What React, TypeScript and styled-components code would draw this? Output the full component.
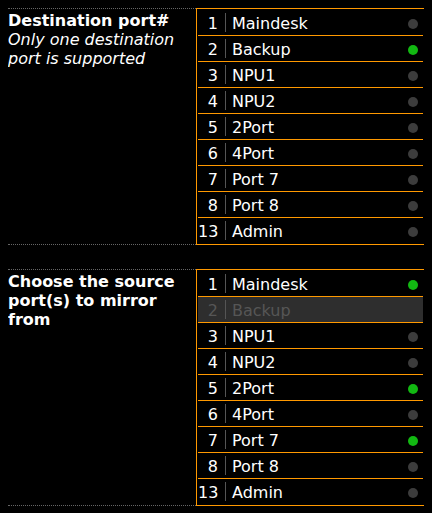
import React from "react";
import styled, { createGlobalStyle } from "styled-components";

const GlobalStyle = createGlobalStyle`
  html, body {
    background: #000;
  }
  body {
    margin: 8px;
    color: #fff;
    font-family: "DejaVu Sans", Verdana, sans-serif;
    font-size: 16px;
  }
`;

const Page = styled.div`
  display: flex;
  flex-direction: column;
  gap: 24px;
`;

const Section = styled.div`
  display: flex;
  align-items: stretch;
`;

const Label = styled.div`
  flex: none;
  width: 188px;
  box-sizing: border-box;
  border-top: 1px dotted #666;
  border-bottom: 1px dotted #666;
  padding: 2px 0 0 0;
  line-height: 19px;
`;

const Title = styled.div`
  font-weight: bold;
`;

const Note = styled.div`
  font-style: italic;
`;

const PortList = styled.div`
  flex: none;
  width: 229px;
  box-sizing: border-box;
  border: 1px solid #ff9900;
  padding: 1px;
`;

const PortRow = styled.div<{ $disabled?: boolean }>`
  display: flex;
  align-items: center;
  height: 25px;
  border-bottom: 1px solid #ff9900;
  background: ${(p) => (p.$disabled ? "#2e2e2e" : "transparent")};
  color: ${(p) => (p.$disabled ? "#565656" : "#fff")};
  &:last-child {
    border-bottom: none;
  }
`;

const Num = styled.span`
  flex: none;
  width: 27px;
  box-sizing: border-box;
  padding: 2px 7px 0 0;
  line-height: 23px;
  text-align: right;
`;

const Sep = styled.span`
  flex: none;
  width: 1px;
  height: 19px;
  background: #555;
`;

const Name = styled.span`
  flex: 1;
  padding: 2px 0 0 6px;
  line-height: 23px;
  white-space: nowrap;
`;

const Dot = styled.span<{ $on?: boolean }>`
  flex: none;
  width: 10px;
  height: 10px;
  border-radius: 50%;
  margin: 3px 5px 0 0;
  background: ${(p) => (p.$on ? "#12b812" : "#3c3c3c")};
`;

type Port = { id: number; name: string };

const ports: Port[] = [
  { id: 1, name: "Maindesk" },
  { id: 2, name: "Backup" },
  { id: 3, name: "NPU1" },
  { id: 4, name: "NPU2" },
  { id: 5, name: "2Port" },
  { id: 6, name: "4Port" },
  { id: 7, name: "Port 7" },
  { id: 8, name: "Port 8" },
  { id: 13, name: "Admin" },
];

function List({ on, disabled = [] }: { on: number[]; disabled?: number[] }) {
  return (
    <PortList>
      {ports.map((p) => {
        const dis = disabled.includes(p.id);
        return (
          <PortRow key={p.id} $disabled={dis}>
            <Num>{p.id}</Num>
            <Sep />
            <Name>{p.name}</Name>
            {!dis && <Dot $on={on.includes(p.id)} />}
          </PortRow>
        );
      })}
    </PortList>
  );
}

export default function App() {
  return (
    <>
      <GlobalStyle />
      <Page>
        <Section>
          <Label>
            <Title>Destination port#</Title>
            <Note>Only one destination port is supported</Note>
          </Label>
          <List on={[2]} />
        </Section>
        <Section>
          <Label>
            <Title>Choose the source port(s) to mirror from</Title>
          </Label>
          <List on={[1, 5, 7]} disabled={[2]} />
        </Section>
      </Page>
    </>
  );
}
